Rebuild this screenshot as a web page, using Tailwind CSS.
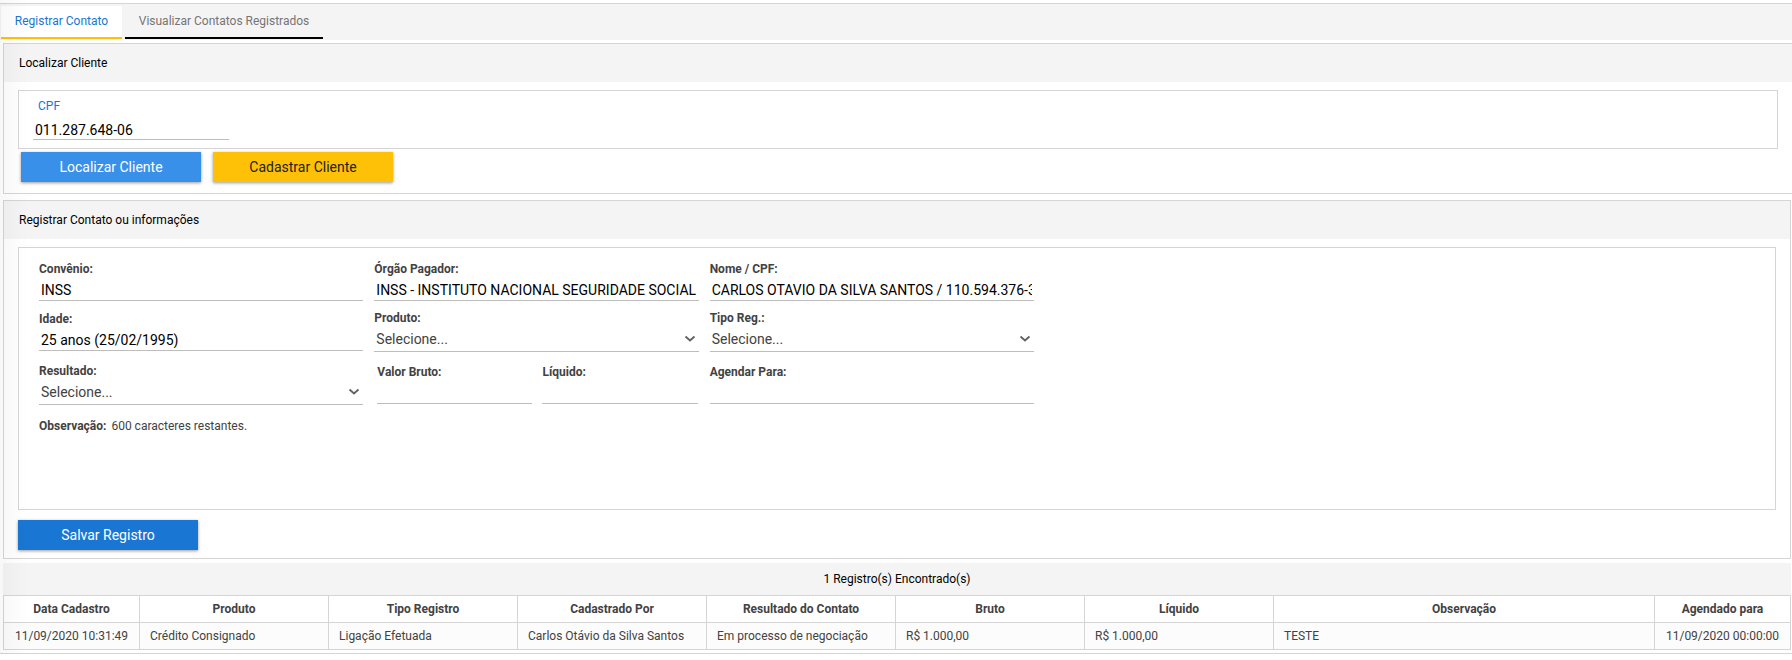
<!DOCTYPE html>
<html lang="pt-BR">

<head>
    <meta charset="UTF-8">
    <meta name="viewport" content="width=device-width, initial-scale=1.0">
    <title>Registrar Contato</title>
    <script src="https://cdn.jsdelivr.net/npm/@tailwindcss/browser@4"></script>
</head>

<body class="relative bg-white font-[Roboto,sans-serif] text-xs text-[#424242] pt-[3px]">
    <!-- Tabs -->
    <nav class="flex gap-[3px] h-[37px] pl-px pt-[2px] pb-px bg-[#f4f4f4] border-t border-[#d5d5d5]">
        <button class="h-[33px] w-[121px] pb-[2px] bg-white text-[#1976d2] border-b-2 border-[#ffc107]">Registrar Contato</button>
        <button class="h-[33px] w-[198px] pb-[2px] text-[#757575] border-b-2 border-black">Visualizar Contatos Registrados</button>
    </nav>

    <!-- Localizar Cliente -->
    <section class="mt-[3px] ml-[3px] border border-r-0 border-[#d5d5d5]">
        <h2 class="h-[38px] flex items-center px-[15px] bg-[#f4f4f4] text-black">Localizar Cliente</h2>
        <div class="mt-2 ml-[14px] mr-[14px] h-[59px] pl-[14px] pt-2 border border-[#d5d5d5]">
            <label for="cpf" class="block pl-[5px] leading-[14px] text-[#1976d2]">CPF</label>
            <input id="cpf" type="text" value="011.287.648-06"
                class="block mt-[7px] h-5 w-[196px] px-[2px] text-sm text-black border-b border-[#bdbdbd] outline-none">
        </div>
        <div class="flex gap-3 pt-[3px] pl-[17px] pb-[11px]">
            <button class="h-[30px] w-[180px] bg-[#3990e9] text-white text-sm shadow-[0_1px_3px_rgba(0,0,0,0.4)]">Localizar Cliente</button>
            <button class="h-[30px] w-[180px] bg-[#ffc107] text-[#212121] text-sm shadow-[0_1px_3px_rgba(0,0,0,0.4)]">Cadastrar Cliente</button>
        </div>
    </section>

    <!-- Registrar Contato -->
    <section class="mt-[6px] ml-[3px] mr-px border border-[#d5d5d5]">
        <h2 class="h-[38px] flex items-center px-[15px] bg-[#f4f4f4] text-black">Registrar Contato ou informações</h2>
        <div class="mt-2 mx-[14px] h-[263px] px-5 pt-[14px] border border-[#d5d5d5]">
            <div class="grid grid-cols-3 gap-x-[11px] max-w-[995px]">
                <div>
                    <label for="convenio" class="block leading-[14px] font-bold">Convênio:</label>
                    <input id="convenio" type="text" value="INSS"
                        class="block mt-1 h-[21px] w-full px-[2px] text-sm text-black border-b border-[#bdbdbd] outline-none">
                </div>
                <div>
                    <label for="orgao" class="block leading-[14px] font-bold">Órgão Pagador:</label>
                    <input id="orgao" type="text" value="INSS - INSTITUTO NACIONAL SEGURIDADE SOCIAL - INSS"
                        class="block mt-1 h-[21px] w-full px-[2px] text-sm text-black border-b border-[#bdbdbd] outline-none">
                </div>
                <div>
                    <label for="nome" class="block leading-[14px] font-bold">Nome / CPF:</label>
                    <input id="nome" type="text" value="CARLOS OTAVIO DA SILVA SANTOS / 110.594.376-34"
                        class="block mt-1 h-[21px] w-full px-[2px] text-sm text-black border-b border-[#bdbdbd] outline-none">
                </div>

                <div class="mt-[11px]">
                    <label for="idade" class="block leading-[14px] font-bold">Idade:</label>
                    <input id="idade" type="text" value="25 anos (25/02/1995)"
                        class="block mt-1 h-[21px] w-full px-[2px] text-sm text-black border-b border-[#bdbdbd] outline-none">
                </div>
                <div class="mt-[10px]">
                    <label for="produto" class="block leading-[14px] font-bold">Produto:</label>
                    <div class="relative mt-1">
                        <select id="produto" class="block appearance-none h-[23px] w-full pl-[2px] pb-[2px] text-sm border-b border-[#bdbdbd] outline-none">
                            <option>Selecione...</option>
                        </select>
                        <svg class="absolute right-[3px] top-[5px] pointer-events-none" width="12" height="10" viewBox="0 0 12 10" fill="none" stroke="#616161" stroke-width="1.8"><path d="M1.5 2.5 6 6.5l4.5-4" /></svg>
                    </div>
                </div>
                <div class="mt-[10px]">
                    <label for="tipo" class="block leading-[14px] font-bold">Tipo Reg.:</label>
                    <div class="relative mt-1">
                        <select id="tipo" class="block appearance-none h-[23px] w-full pl-[2px] pb-[2px] text-sm border-b border-[#bdbdbd] outline-none">
                            <option>Selecione...</option>
                        </select>
                        <svg class="absolute right-[3px] top-[5px] pointer-events-none" width="12" height="10" viewBox="0 0 12 10" fill="none" stroke="#616161" stroke-width="1.8"><path d="M1.5 2.5 6 6.5l4.5-4" /></svg>
                    </div>
                </div>

                <div class="mt-3">
                    <label for="resultado" class="block leading-[14px] font-bold">Resultado:</label>
                    <div class="relative mt-1">
                        <select id="resultado" class="block appearance-none h-[23px] w-full pl-[2px] pb-[2px] text-sm border-b border-[#bdbdbd] outline-none">
                            <option>Selecione...</option>
                        </select>
                        <svg class="absolute right-[3px] top-[5px] pointer-events-none" width="12" height="10" viewBox="0 0 12 10" fill="none" stroke="#616161" stroke-width="1.8"><path d="M1.5 2.5 6 6.5l4.5-4" /></svg>
                    </div>
                </div>
                <div class="mt-[13px] pl-[3px] pr-px grid grid-cols-2 gap-x-[10px]">
                    <div>
                        <label for="bruto" class="block leading-[14px] font-bold">Valor Bruto:</label>
                        <input id="bruto" type="text"
                            class="block mt-1 h-[21px] w-full px-[2px] text-sm border-b border-[#bdbdbd] outline-none">
                    </div>
                    <div>
                        <label for="liquido" class="block leading-[14px] font-bold">Líquido:</label>
                        <input id="liquido" type="text"
                            class="block mt-1 h-[21px] w-full px-[2px] text-sm border-b border-[#bdbdbd] outline-none">
                    </div>
                </div>
                <div class="mt-[13px]">
                    <label for="agendar" class="block leading-[14px] font-bold">Agendar Para:</label>
                    <input id="agendar" type="text"
                        class="block mt-1 h-[21px] w-full px-[2px] text-sm border-b border-[#bdbdbd] outline-none">
                </div>
            </div>
            <p class="mt-[14px] leading-[14px]"><b class="mr-[5px]">Observação:</b>600 caracteres restantes.</p>
        </div>
        <div class="pt-[10px] pl-[14px] pb-2">
            <button class="h-[30px] w-[180px] bg-[#1976d2] text-white text-sm shadow-[0_1px_3px_rgba(0,0,0,0.4)]">Salvar Registro</button>
        </div>
    </section>

    <!-- Registros -->
    <div class="pt-1 pb-[3px] pl-[3px] pr-px border-b border-[#d5d5d5]">
        <table class="w-full table-fixed border-collapse">
            <caption class="h-8 leading-8 bg-[#f4f4f4] text-black">1 Registro(s) Encontrado(s)</caption>
            <colgroup>
                <col class="w-[136px]">
                <col class="w-[189px]">
                <col class="w-[189px]">
                <col class="w-[189px]">
                <col class="w-[189px]">
                <col class="w-[189px]">
                <col class="w-[189px]">
                <col>
                <col class="w-[136px]">
            </colgroup>
            <thead>
                <tr class="h-[27px]">
                    <th class="border border-[#d5d5d5]">Data Cadastro</th>
                    <th class="border border-[#d5d5d5]">Produto</th>
                    <th class="border border-[#d5d5d5]">Tipo Registro</th>
                    <th class="border border-[#d5d5d5]">Cadastrado Por</th>
                    <th class="border border-[#d5d5d5]">Resultado do Contato</th>
                    <th class="border border-[#d5d5d5]">Bruto</th>
                    <th class="border border-[#d5d5d5]">Líquido</th>
                    <th class="border border-[#d5d5d5]">Observação</th>
                    <th class="border border-[#d5d5d5]">Agendado para</th>
                </tr>
            </thead>
            <tbody>
                <tr class="h-[27px] bg-[#fcfcfc]">
                    <td class="border border-[#d5d5d5] text-center whitespace-nowrap">11/09/2020 10:31:49</td>
                    <td class="border border-[#d5d5d5] px-[10px]">Crédito Consignado</td>
                    <td class="border border-[#d5d5d5] px-[10px]">Ligação Efetuada</td>
                    <td class="border border-[#d5d5d5] px-[10px]">Carlos Otávio da Silva Santos</td>
                    <td class="border border-[#d5d5d5] px-[10px]">Em processo de negociação</td>
                    <td class="border border-[#d5d5d5] px-[10px]">R$ 1.000,00</td>
                    <td class="border border-[#d5d5d5] px-[10px]">R$ 1.000,00</td>
                    <td class="border border-[#d5d5d5] px-[10px]">TESTE</td>
                    <td class="border border-[#d5d5d5] text-center whitespace-nowrap">11/09/2020 00:00:00</td>
                </tr>
            </tbody>
        </table>
    </div>

    <!-- Soft shade along the left edge -->
    <div class="absolute left-0 inset-y-0 w-7 bg-linear-to-r from-black/3 to-transparent pointer-events-none"></div>
</body>

</html>
